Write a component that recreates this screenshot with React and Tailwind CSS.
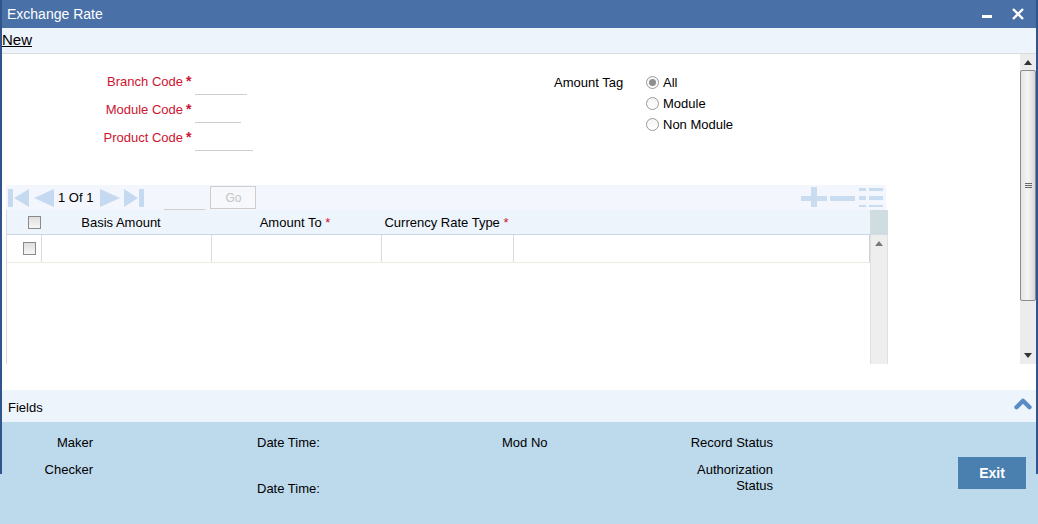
import { ChevronUp } from 'lucide-react'

const FONT = { fontFamily: '"Liberation Sans", Arial, sans-serif' }
const NAV_FILL = '#c5d9f0'

function Radio({ checked, label }) {
  return (
    <label className="flex h-[21px] items-center gap-[4px]">
      <span className="flex h-[13px] w-[13px] items-center justify-center rounded-full border border-[#9a9a9a] bg-gradient-to-b from-[#f4f4f4] to-white">
        {checked && <span className="h-[7px] w-[7px] rounded-full bg-[#8f8f8f]" />}
      </span>
      <span className="text-[13px] text-black">{label}</span>
    </label>
  )
}

function Checkbox() {
  return <span className="block h-[13px] w-[13px] border border-[#8a8a8a] bg-gradient-to-b from-[#dedede] to-[#f6f6f6]" />
}

function FieldRow({ label, inputWidth }) {
  return (
    <div className="flex h-[28px] items-center">
      <span className="w-[181px] text-right text-[13px] text-[#cc1430]">{label}</span>
      <span className="w-[12px] self-start pl-[3px] pt-[3px] text-[14px] font-bold text-[#cc1430]">*</span>
      <span className="mt-[4px] h-[22px] border-b border-[#cfcfcf]" style={{ width: inputWidth }} />
    </div>
  )
}

function NavIcons() {
  return (
    <div className="flex items-center">
      <svg width="22" height="22" viewBox="0 0 22 22" className="ml-[2px]">
        <rect x="0" y="2" width="5" height="18" fill={NAV_FILL} />
        <path d="M21 2 L6 11 L21 20 Z" fill={NAV_FILL} />
      </svg>
      <svg width="24" height="22" viewBox="0 0 24 22" className="ml-[2px]">
        <path d="M22 2 L2 11 L22 20 Z" fill={NAV_FILL} />
      </svg>
      <span className="ml-[2px] text-[13px] text-black">1 Of 1</span>
      <svg width="22" height="22" viewBox="0 0 22 22" className="ml-[6px]">
        <path d="M1 2 L21 11 L1 20 Z" fill={NAV_FILL} />
      </svg>
      <svg width="22" height="22" viewBox="0 0 22 22" className="ml-[2px]">
        <path d="M1 2 L15 11 L1 20 Z" fill={NAV_FILL} />
        <rect x="16" y="2" width="5" height="18" fill={NAV_FILL} />
      </svg>
    </div>
  )
}

function GridActions() {
  return (
    <svg width="84" height="22" viewBox="0 0 84 22">
      <rect x="0" y="9" width="26" height="5" fill="#c9dcf0" />
      <rect x="10" y="0" width="6" height="20" fill="#c9dcf0" />
      <rect x="29" y="9" width="25" height="5" fill="#c9dcf0" />
      <rect x="58" y="1" width="7" height="3" fill="#c9dcf0" />
      <rect x="68" y="1" width="14" height="3" fill="#c9dcf0" />
      <rect x="58" y="9" width="7" height="4" fill="#c9dcf0" />
      <rect x="68" y="9" width="14" height="4" fill="#c9dcf0" />
      <rect x="58" y="18" width="7" height="2" fill="#c9dcf0" />
      <rect x="68" y="18" width="14" height="2" fill="#c9dcf0" />
    </svg>
  )
}

export default function App() {
  return (
    <div className="relative h-[524px] w-[1038px] overflow-hidden bg-white" style={FONT}>
      {/* window frame edges */}
      <div className="absolute left-0 top-0 h-[474px] w-[2px] bg-[#2f558c]" />
      <div className="absolute right-0 top-0 h-[474px] w-[2px] bg-[#2f558c]" />

      <div className="flex h-[28px] items-center justify-between bg-[#4a70a8] pl-[7px] pr-[14px]">
        <span className="text-[14px] text-white">Exchange Rate</span>
        <div className="flex items-center gap-[20px]">
          <span className="mt-[4px] h-[3px] w-[10px] bg-white" />
          <svg width="12" height="12" viewBox="0 0 12 12">
            <path d="M1 1 L11 11 M11 1 L1 11" stroke="white" strokeWidth="2.4" />
          </svg>
        </div>
      </div>

      <div className="flex h-[26px] items-center border-b border-[#dcdcdc] bg-[#eef4fc] pl-[2px]">
        <span className="text-[15px] text-black underline">New</span>
      </div>

      <div className="flex h-[336px] pl-[2px] pr-[2px]">
        <div className="flex-1">
          <div className="flex pt-[14px]">
            <div className="flex flex-col">
              <FieldRow label="Branch Code" inputWidth={52} />
              <FieldRow label="Module Code" inputWidth={46} />
              <FieldRow label="Product Code" inputWidth={58} />
            </div>
            <div className="ml-[301px] flex">
              <span className="w-[92px] pt-[5px] text-[13px] text-black">Amount Tag</span>
              <div className="flex flex-col pt-[4px]">
                <Radio checked label="All" />
                <Radio label="Module" />
                <Radio label="Non Module" />
              </div>
            </div>
          </div>

          <div className="ml-[4px] mt-[33px] w-[882px]">
            <div className="flex h-[25px] w-[880px] items-center bg-[#f3f7fd]">
              <NavIcons />
              <span className="ml-[19px] mt-[4px] h-[20px] w-[41px] border-b border-[#cfcfcf]" />
              <span className="ml-[5px] flex h-[23px] w-[46px] items-center justify-center border border-[#cdcdcd] bg-[#f6f8fb] text-[12px] text-[#c4c4c4]">
                Go
              </span>
              <div className="ml-auto mr-[1px]">
                <GridActions />
              </div>
            </div>

            <div className="flex h-[154px]">
              <div className="w-[864px] border-l border-[#dadada]">
                <div className="flex h-[25px] items-center border-b border-[#c8d7e8] bg-[#edf4fc] pt-[1px] text-[13px] text-black">
                  <div className="flex w-[35px] justify-end pr-[1px]">
                    <Checkbox />
                  </div>
                  <div className="w-[170px] pr-[12px] text-center">Basis Amount</div>
                  <div className="w-[170px] pr-[4px] text-center">
                    Amount To <span className="text-[#cc1430]">*</span>
                  </div>
                  <div className="w-[132px] pr-[3px] text-center">
                    Currency Rate Type <span className="text-[#cc1430]">*</span>
                  </div>
                </div>
                <div className="flex h-[28px] border-b border-[#eeeae2]">
                  <div className="flex w-[35px] items-center justify-end border-r border-[#dcdcdc] pr-[5px]">
                    <Checkbox />
                  </div>
                  <div className="w-[170px] border-r border-[#dcdcdc]" />
                  <div className="w-[170px] border-r border-[#dcdcdc]" />
                  <div className="w-[132px] border-r border-[#dcdcdc]" />
                  <div className="flex-1 border-r border-[#c9d4de]" />
                </div>
              </div>
              <div className="flex w-[18px] flex-col">
                <div className="h-[25px] bg-[#cfdde0]" />
                <div className="flex flex-1 justify-center border-x border-[#e0e0e0] bg-[#eeeeee] pt-[6px]">
                  <svg width="8" height="5" viewBox="0 0 8 5">
                    <path d="M0 5 L4 0 L8 5 Z" fill="#7a7a7a" />
                  </svg>
                </div>
              </div>
            </div>
          </div>
        </div>

        <div className="flex h-[310px] w-[16px] flex-col bg-[#ececec]">
          <div className="flex h-[16px] items-center justify-center">
            <svg width="8" height="5" viewBox="0 0 8 5">
              <path d="M0 5 L4 0 L8 5 Z" fill="#333" />
            </svg>
          </div>
          <div className="flex h-[231px] items-center justify-center rounded-[2px] border border-[#8c8c8c] bg-gradient-to-r from-[#e6e6e6] via-[#f4f4f4] to-[#d6d6d6]">
            <svg width="7" height="6" viewBox="0 0 7 6">
              <path d="M0 0.5 H7 M0 2.5 H7 M0 4.5 H7" stroke="#666" strokeWidth="1" />
            </svg>
          </div>
          <div className="flex flex-1 items-end justify-center pb-[6px]">
            <svg width="8" height="5" viewBox="0 0 8 5">
              <path d="M0 0 L8 0 L4 5 Z" fill="#333" />
            </svg>
          </div>
        </div>
      </div>

      <div className="flex h-[32px] items-center justify-between bg-[#eef4fc] pl-[8px] pr-[2px] pt-[3px]">
        <span className="text-[13px] text-black">Fields</span>
        <ChevronUp size={26} strokeWidth={4} className="mb-[8px] text-[#5b8bc6]" />
      </div>

      <div className="flex h-[102px] bg-[#bdd9ec] pt-[13px] text-[13px] leading-[16px] text-black">
        <div className="flex w-[93px] flex-col items-end gap-[11px]">
          <span>Maker</span>
          <span>Checker</span>
        </div>
        <div className="ml-[164px] flex w-[245px] flex-col gap-[30px]">
          <span>Date Time:</span>
          <span>Date Time:</span>
        </div>
        <div className="w-[100px]">Mod No</div>
        <div className="flex w-[171px] flex-col items-end gap-[11px] text-right">
          <span>Record Status</span>
          <span>
            Authorization
            <br />
            Status
          </span>
        </div>
        <div className="ml-[185px] mt-[22px] flex h-[32px] w-[68px] items-center justify-center bg-[#4a80b0] text-[14px] font-bold text-white">
          Exit
        </div>
      </div>
    </div>
  )
}
